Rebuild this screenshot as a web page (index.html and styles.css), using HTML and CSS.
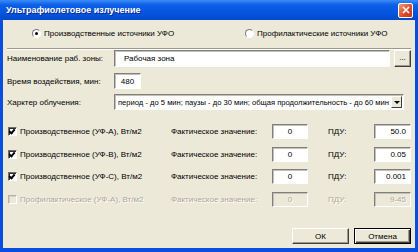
FILE: index.html
```html
<!DOCTYPE html>
<html lang="ru">
  <head>
    <meta charset="UTF-8" />
    <title>Ультрафиолетовое излучение</title>
    <link rel="stylesheet" href="styles.css">
  </head>
  <body>
    <div class="window">
      <div class="titlebar">
        <span class="title">Ультрафиолетовое излучение</span>
        <span class="close">
          <svg width="8" height="8" viewBox="0 0 8 8">
            <path d="M1 1 L7 7 M7 1 L1 7" stroke="#fff" stroke-width="1.6" />
          </svg>
        </span>
      </div>

      <div class="dialog">
        <div class="sources">
          <label class="radio-item first">
            <span class="radio checked"></span>
            Производственные источники УФО
          </label>
          <label class="radio-item">
            <span class="radio"></span>
            Профилактические источники УФО
          </label>
        </div>

        <div class="separator"></div>

        <div class="field">
          <span class="field-label">Наименование раб. зоны:</span>
          <span class="textbox zone">Рабочая зона</span>
          <span class="btn browse">...</span>
        </div>

        <div class="field">
          <span class="field-label">Время воздействия, мин:</span>
          <span class="textbox time">480</span>
        </div>

        <div class="field">
          <span class="field-label">Харктер облучения:</span>
          <span class="combo">
            <span class="combo-text">период - до 5 мин; паузы - до 30 мин; общая продолжительность - до 60 мин</span>
            <span class="combo-arrow"></span>
          </span>
        </div>

        <div class="measures">
          <div class="measure">
            <span class="check-item"><span class="checkbox checked"></span>Производственное (УФ-А), Вт/м2</span>
            <span>Фактическое значение:</span>
            <span class="textbox value">0</span>
            <span class="limit-label">ПДУ:</span>
            <span class="textbox value right">50.0</span>
          </div>
          <div class="measure">
            <span class="check-item"><span class="checkbox checked"></span>Производственное (УФ-В), Вт/м2</span>
            <span>Фактическое значение:</span>
            <span class="textbox value">0</span>
            <span class="limit-label">ПДУ:</span>
            <span class="textbox value right">0.05</span>
          </div>
          <div class="measure">
            <span class="check-item"><span class="checkbox checked"></span>Производственное (УФ-С), Вт/м2</span>
            <span>Фактическое значение:</span>
            <span class="textbox value">0</span>
            <span class="limit-label">ПДУ:</span>
            <span class="textbox value right">0.001</span>
          </div>
          <div class="measure disabled">
            <span class="check-item"><span class="checkbox"></span>Профилактическое (УФ-А), Вт/м2</span>
            <span>Фактическое значение:</span>
            <span class="textbox value">0</span>
            <span class="limit-label">ПДУ:</span>
            <span class="textbox value right">9-45</span>
          </div>
        </div>

        <div class="actions">
          <span class="btn action">ОК</span>
          <span class="btn action default">Отмена</span>
        </div>
      </div>
    </div>
  </body>
</html>
```

FILE: styles.css
```css
body {
  margin: 0;
  font-family: "Liberation Sans", Arial, sans-serif;
  font-size: 8px;
  color: #000;
}

.window {
  width: 418px;
  height: 252px;
  box-sizing: border-box;
  display: flex;
  flex-direction: column;
  background-color: #0a4ee0;
}

.titlebar {
  height: 20px;
  display: flex;
  justify-content: space-between;
  align-items: center;
  padding: 0 5px 0 6px;
  background: linear-gradient(#3b8cf5 0%, #0a5fe8 25%, #0552dd 70%, #0348c9 100%);
}

.title {
  color: #fff;
  font-weight: bold;
  font-size: 9px;
  text-shadow: 1px 1px 0 #0a2a8a;
}

.close {
  width: 13px;
  height: 13px;
  display: flex;
  justify-content: center;
  align-items: center;
  border: 1px solid #fff;
  border-radius: 2px;
  background: linear-gradient(135deg, #f09a7c, #db4a26 60%, #c5381a);
}

.dialog {
  flex: 1;
  margin: 0 3px 4px 3px;
  padding: 0 4px 4px 4px;
  display: flex;
  flex-direction: column;
  background-color: #ece9d8;
}

.sources {
  display: flex;
  align-items: center;
  height: 14px;
  margin-top: 6px;
  padding-left: 25px;
}

.radio-item {
  display: flex;
  align-items: center;
  gap: 3px;
}

.radio-item.first {
  width: 213px;
}

.radio {
  width: 7px;
  height: 7px;
  border-radius: 50%;
  border: 1px solid;
  border-color: #7a7a7a #fff #fff #7a7a7a;
  background-color: #fff;
  display: flex;
  justify-content: center;
  align-items: center;
}

.radio.checked::after {
  content: "";
  width: 3px;
  height: 3px;
  border-radius: 50%;
  background-color: #000;
}

.separator {
  margin-top: 8px;
  height: 1px;
  background-color: #9d9a8c;
  border-bottom: 1px solid #fff;
}

.field {
  display: flex;
  align-items: center;
}

.field:nth-of-type(1) {
  margin-top: 9px;
}

.field + .field {
  margin-top: 6px;
}

.field + .field + .field {
  margin-top: 5px;
}

.field-label {
  width: 107px;
}

.textbox {
  box-sizing: border-box;
  height: 16px;
  display: flex;
  align-items: center;
  justify-content: center;
  padding: 0 4px;
  background-color: #fff;
  border: 1px solid;
  border-color: #7f7f7f #fff #fff #7f7f7f;
  box-shadow: inset 1px 1px 0 #c4c1b4;
}

.textbox.zone {
  flex: 1;
  height: 17px;
  justify-content: flex-start;
  padding-left: 9px;
}

.textbox.time {
  width: 27px;
}

.btn {
  box-sizing: border-box;
  display: flex;
  justify-content: center;
  align-items: center;
  background-color: #ece9d8;
  border: 1px solid;
  border-color: #fff #404040 #404040 #fff;
  box-shadow: inset -1px -1px 0 #9d9a8c;
}

.browse {
  width: 17px;
  height: 17px;
  margin-left: 4px;
  padding-bottom: 3px;
}

.combo {
  box-sizing: border-box;
  width: 290px;
  height: 16px;
  display: flex;
  align-items: center;
  background-color: #fff;
  border: 1px solid;
  border-color: #7f7f7f #fff #fff #7f7f7f;
  box-shadow: inset 1px 1px 0 #c4c1b4;
}

.combo-text {
  flex: 1;
  padding-left: 3px;
  font-size: 7.6px;
  white-space: nowrap;
  overflow: hidden;
}

.combo-arrow {
  width: 11px;
  height: 12px;
  margin-right: 1px;
  box-sizing: border-box;
  display: flex;
  justify-content: center;
  align-items: center;
  background-color: #ece9d8;
  border: 1px solid;
  border-color: #fff #404040 #404040 #fff;
}

.combo-arrow::after {
  content: "";
  border-left: 3px solid transparent;
  border-right: 3px solid transparent;
  border-top: 3px solid #000;
}

.measures {
  margin-top: 14px;
  display: flex;
  flex-direction: column;
  gap: 7.5px;
}

.measure {
  display: grid;
  grid-template-columns: 164px 101px 36px 1fr 37px;
  align-items: center;
  height: 15px;
}

.measure .textbox {
  height: 15px;
}

.textbox.right {
  justify-content: flex-end;
}

.limit-label {
  padding-left: 20px;
}

.check-item {
  display: flex;
  align-items: center;
  gap: 3px;
  padding-left: 1px;
}

.checkbox {
  box-sizing: border-box;
  width: 9px;
  height: 9px;
  background-color: #fff;
  border: 1px solid;
  border-color: #6f6f6f #fff #fff #6f6f6f;
  box-shadow: inset 1px 1px 0 #2f2f2f;
  position: relative;
}

.checkbox.checked::after {
  content: "";
  position: absolute;
  left: 1px;
  top: 0px;
  width: 2px;
  height: 4px;
  border-right: 2px solid #000;
  border-bottom: 2px solid #000;
  transform: rotate(40deg);
}

.measure.disabled {
  color: #aca899;
  text-shadow: 1px 1px 0 #fff;
}

.measure.disabled .textbox {
  background-color: #ece9d8;
}

.measure.disabled .checkbox {
  background-color: #ece9d8;
  border-color: #b5b2a4 #fff #fff #b5b2a4;
  box-shadow: inset 1px 1px 0 #d4d0c8;
}

.actions {
  margin-top: auto;
  display: flex;
  justify-content: flex-end;
  gap: 5px;
}

.action {
  width: 57px;
  height: 16px;
}

.action.default {
  border: 1px solid #000;
  box-shadow: inset 1px 1px 0 #fff, inset -1px -1px 0 #404040, inset -2px -2px 0 #9d9a8c;
}
```
